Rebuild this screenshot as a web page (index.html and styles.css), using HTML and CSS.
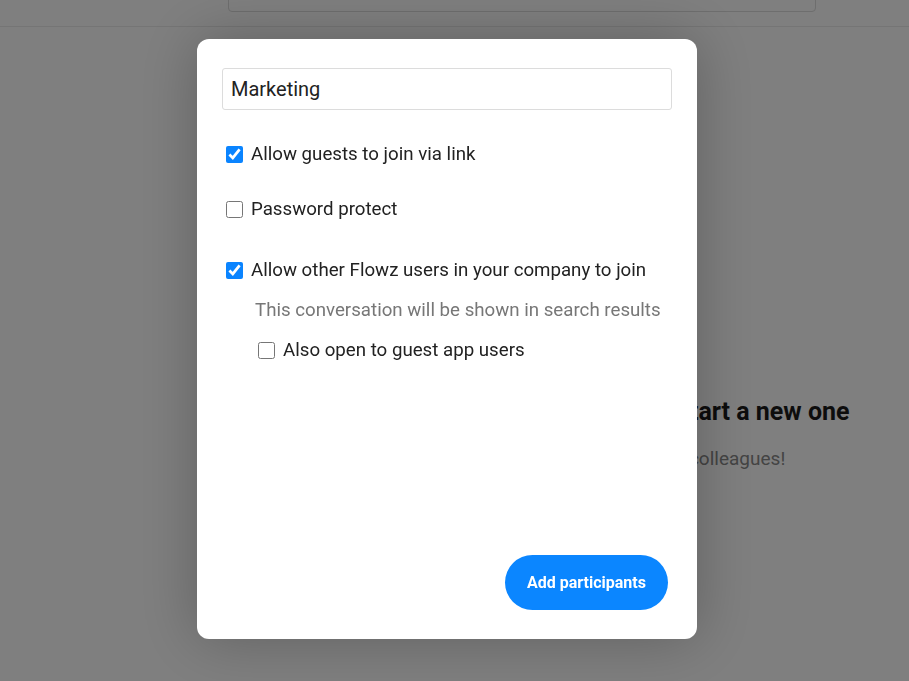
FILE: index.html
```html
<!DOCTYPE html>
<html>
<head>
<meta charset="utf-8">
<link rel="stylesheet" href="styles.css">
</head>
<body>
<div class="app">
  <header class="topbar">
    <div class="search"></div>
  </header>
  <main class="empty">
    <h2 class="empty-title">Select a conversation or start a new one</h2>
    <p class="empty-text">Start chatting with all your colleagues!</p>
  </main>
</div>
<div class="overlay"></div>
<div class="modal">
  <input class="name-input" type="text" value="Marketing">
  <label class="row row-1"><input type="checkbox" checked> <span>Allow guests to join via link</span></label>
  <label class="row row-2"><input type="checkbox"> <span>Password protect</span></label>
  <label class="row row-3"><input type="checkbox" checked> <span>Allow other Flowz users in your company to join</span></label>
  <p class="hint">This conversation will be shown in search results</p>
  <label class="row row-sub"><input type="checkbox"> <span>Also open to guest app users</span></label>
  <div class="footer">
    <button class="primary">Add participants</button>
  </div>
</div>
</body>
</html>
```
FILE: styles.css
```css
* { box-sizing: border-box; }
html, body { margin: 0; padding: 0; height: 100%; }
body {
  font-family: Roboto, "Liberation Sans", sans-serif;
  background: #fff;
  color: #222;
  overflow: hidden;
}
.app { height: 100%; display: flex; flex-direction: column; }
.topbar {
  height: 27px;
  border-bottom: 1px solid #eaeaea;
  display: flex;
  padding-left: 228px;
}
.search {
  width: 588px;
  height: 30px;
  margin-top: -18px;
  border: 1px solid #dcdcdc;
  border-radius: 4px;
}
.empty {
  display: flex;
  flex-direction: column;
  align-items: center;
  padding-left: 340px;
  padding-top: 370px;
}
.empty-title {
  margin: 0;
  font-size: 25px;
  font-weight: 700;
  color: #1a1a1a;
  line-height: 30px;
  white-space: nowrap;
}
.empty-text {
  margin: 19px 0 0;
  font-size: 19px;
  color: #888;
  line-height: 26px;
  white-space: nowrap;
}
.overlay {
  position: fixed;
  inset: 0;
  background: rgba(0, 0, 0, 0.5);
}
.modal {
  position: fixed;
  left: 197px;
  top: 39px;
  width: 500px;
  height: 600px;
  background: #fff;
  border-radius: 12px;
  box-shadow: 0 0 60px rgba(0, 0, 0, 0.25);
  padding: 29px 25px 29px 25px;
  display: flex;
  flex-direction: column;
}
.name-input {
  width: 450px;
  height: 42px;
  border: 1px solid #dcdcdc;
  border-radius: 3px;
  padding: 0 8px;
  font-family: inherit;
  font-size: 20px;
  color: #222;
  outline: none;
}
.row {
  display: flex;
  align-items: center;
  font-size: 18.7px;
  line-height: 24px;
  color: #222;
  padding-left: 4px;
}
.row input {
  width: 17px;
  height: 17px;
  margin: 0 8px 0 0;
  accent-color: #0a84ff;
}
.row-1 { margin-top: 32px; }
.row-2 { margin-top: 31px; }
.row-3 { margin-top: 37px; }
.hint {
  margin: 16px 0 0;
  padding-left: 33px;
  font-size: 18.7px;
  line-height: 24px;
  color: #777;
}
.row-sub { margin-top: 16px; padding-left: 36px; }
.footer {
  margin-top: auto;
  display: flex;
  justify-content: flex-end;
  padding-right: 4px;
}
.primary {
  width: 163px;
  height: 55px;
  border: none;
  border-radius: 28px;
  background: #0b86ff;
  color: #fff;
  font-family: inherit;
  font-size: 16px;
  font-weight: 700;
  padding: 0;
}
```
